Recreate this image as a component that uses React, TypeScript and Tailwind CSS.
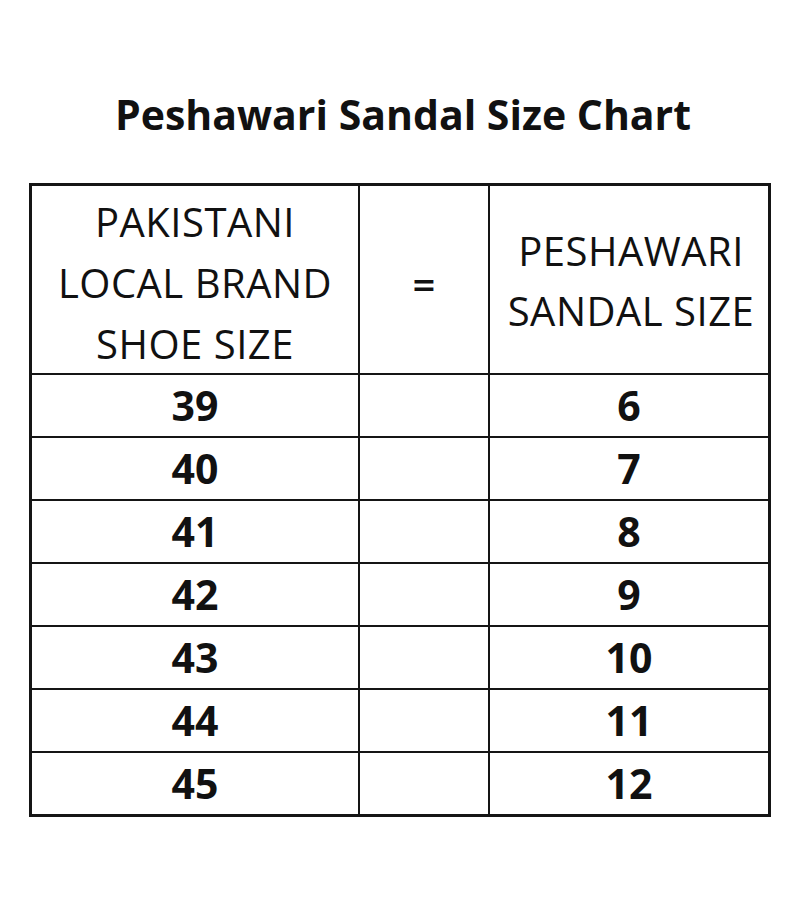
import React from "react";

const rows: [string, string][] = [
  ["39", "6"],
  ["40", "7"],
  ["41", "8"],
  ["42", "9"],
  ["43", "10"],
  ["44", "11"],
  ["45", "12"],
];

export default function App() {
  return (
    <div
      className="w-[800px] h-[900px] bg-white text-[#111] flex flex-col items-center"
      style={{ fontFamily: "'Open Sans', Lato, sans-serif" }}
    >
      <h1 className="mt-[88px] text-[41px] leading-[52px] font-bold pl-[6px]">
        Peshawari Sandal Size Chart
      </h1>
      <div className="mt-[43px] w-[742px] border-[3px] border-[#151515] flex flex-col">
        <div className="flex h-[189px] border-b-2 border-[#151515]">
          <div className="w-[328px] border-r-2 border-[#151515] flex flex-col items-center justify-center text-[40px] tracking-[0.5px] leading-[61px] pt-[6px]">
            <span>PAKISTANI</span>
            <span>LOCAL BRAND</span>
            <span>SHOE SIZE</span>
          </div>
          <div className="w-[130px] border-r-2 border-[#151515] flex items-center justify-center text-[40px] font-semibold pt-[8px]">
            =
          </div>
          <div className="flex-1 flex flex-col items-center justify-center text-[40px] tracking-[0.5px] leading-[60px] pt-[2px] pl-[4px]">
            <span>PESHAWARI</span>
            <span>SANDAL SIZE</span>
          </div>
        </div>
        {rows.map(([a, b], i) => (
          <div
            key={a}
            className={
              i < rows.length - 1
                ? "flex h-[63px] border-b-2 border-[#151515]"
                : "flex h-[61px]"
            }
          >
            <div className="w-[328px] border-r-2 border-[#151515] flex items-center justify-center text-[41px] font-bold">
              {a}
            </div>
            <div className="w-[130px] border-r-2 border-[#151515]" />
            <div className="flex-1 flex items-center justify-center text-[41px] font-bold">
              {b}
            </div>
          </div>
        ))}
      </div>
    </div>
  );
}
